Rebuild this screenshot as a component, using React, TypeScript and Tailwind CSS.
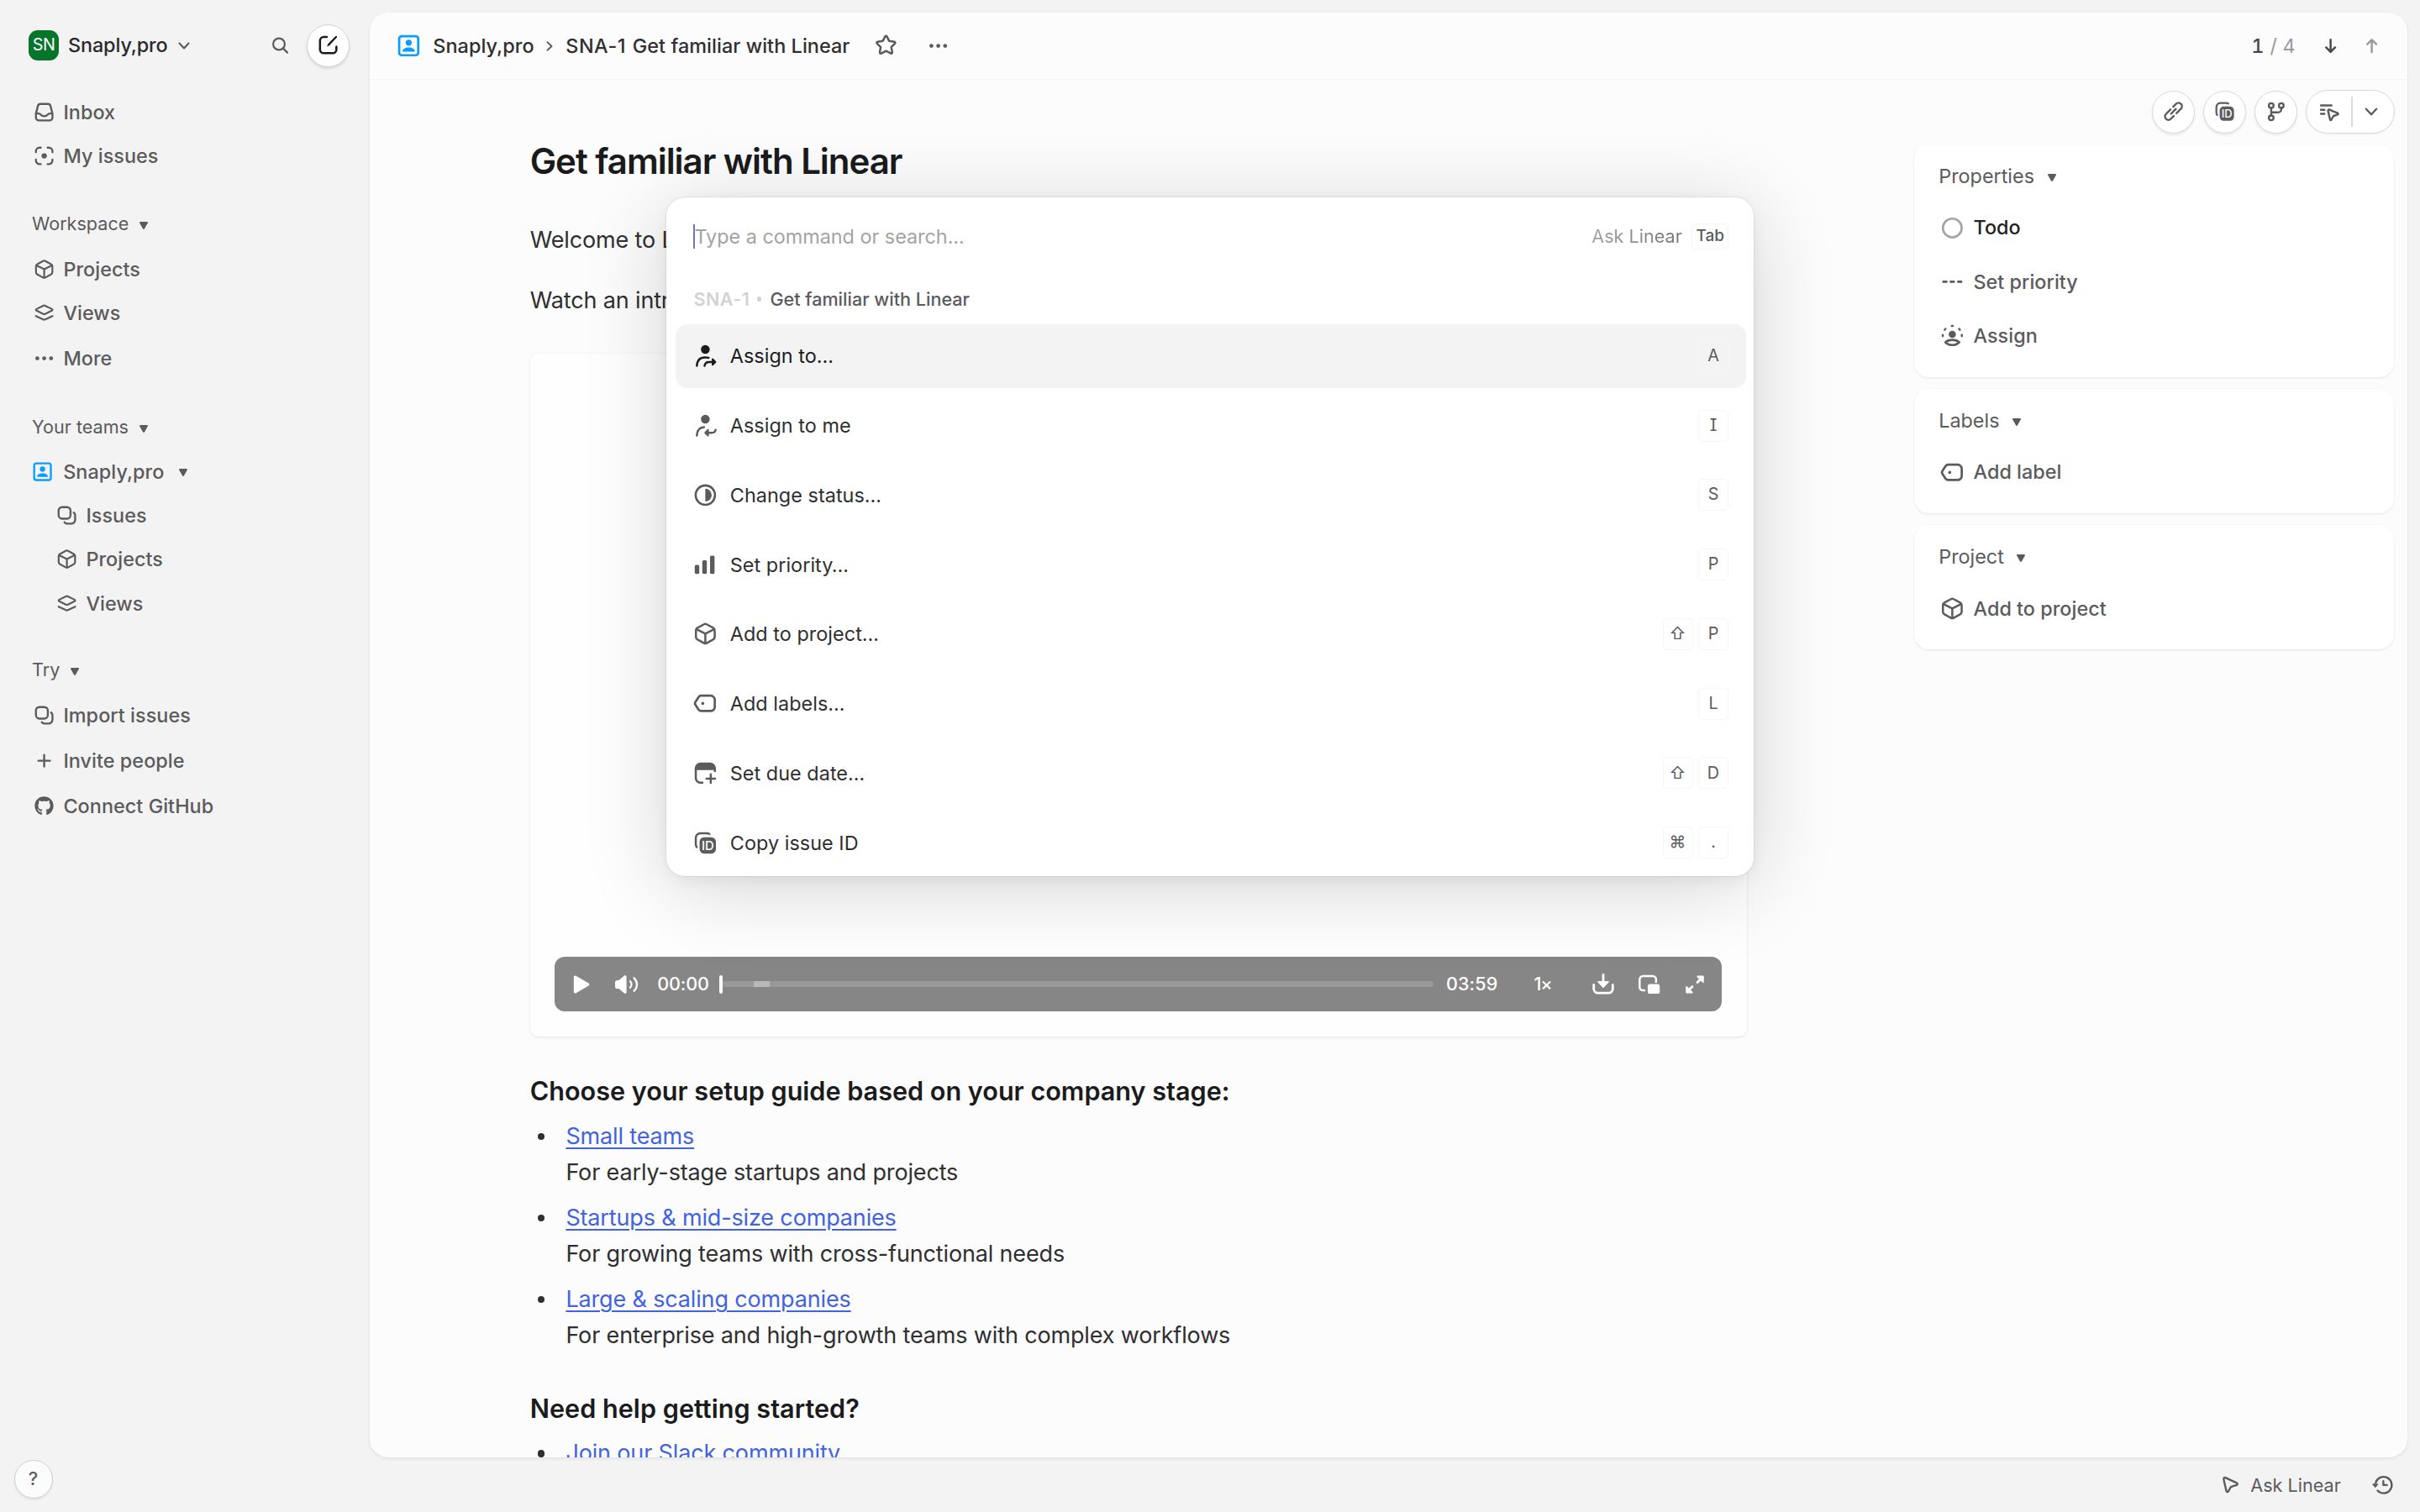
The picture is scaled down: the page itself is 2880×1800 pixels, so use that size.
import type { ReactNode } from "react";
import { FaGithub } from "react-icons/fa";

type IconProps = { className?: string };

function Icon({ className = "size-[25.2px]", children, sw = 1.5 }: { className?: string; children: ReactNode; sw?: number }) {
  return (
    <svg viewBox="0 0 16 16" fill="none" stroke="currentColor" strokeWidth={sw} strokeLinecap="round" strokeLinejoin="round" className={`shrink-0 ${className}`}>
      {children}
    </svg>
  );
}

const InboxIcon = (p: IconProps) => (
  <Icon {...p}>
    <path d="M5.2 1.75h5.6a2 2 0 0 1 1.95 1.5l1.3 5.1c.13.5.2.8.2 1.3V12A2.25 2.25 0 0 1 12 14.25H4A2.25 2.25 0 0 1 1.75 12V9.65c0-.5.07-.8.2-1.3l1.3-5.1a2 2 0 0 1 1.95-1.5Z" />
    <path d="M1.9 9h1.9c.7 0 1.2.35 1.6.85.55.65 1.35 1.15 2.6 1.15s2.05-.5 2.6-1.15c.4-.5.9-.85 1.6-.85h1.9" />
  </Icon>
);
const FocusIcon = (p: IconProps) => (
  <Icon {...p}>
    <path d="M1.75 5.2v-.7A2.75 2.75 0 0 1 4.5 1.75h.9M10.6 1.75h.9a2.75 2.75 0 0 1 2.75 2.75v.7M14.25 10.8v.7a2.75 2.75 0 0 1-2.75 2.75h-.9M5.4 14.25h-.9a2.75 2.75 0 0 1-2.75-2.75v-.7" />
    <circle cx="8" cy="8" r="2" fill="currentColor" stroke="none" />
  </Icon>
);
const CubeIcon = (p: IconProps) => (
  <Icon {...p} sw={1.4}>
    <path d="M7.1 1.8a1.9 1.9 0 0 1 1.8 0l4.25 2.3c.65.35 1.05 1 1.05 1.75v4.3c0 .75-.4 1.4-1.05 1.75L8.9 14.2a1.9 1.9 0 0 1-1.8 0l-4.25-2.3A2 2 0 0 1 1.8 10.15v-4.3c0-.75.4-1.4 1.05-1.75L7.1 1.8Z" />
    <path d="M2.2 5.1 8 8l5.8-2.9M8 8v6.2" />
  </Icon>
);
const LayersIcon = (p: IconProps) => (
  <Icon {...p} sw={1.4}>
    <path d="M7.3 2.5 2.2 5c-.55.3-.55.95 0 1.25l5.1 2.5c.45.2.95.2 1.4 0l5.1-2.5c.55-.3.55-.95 0-1.25L8.7 2.5a1.6 1.6 0 0 0-1.4 0Z" />
    <path d="m1.7 10.3 5.5 2.6c.5.25 1.1.25 1.6 0l5.5-2.6" />
  </Icon>
);
const DotsIcon = (p: IconProps) => (
  <Icon {...p}>
    <g fill="currentColor" stroke="none">
      <circle cx="2.8" cy="8" r="1.5" />
      <circle cx="8" cy="8" r="1.5" />
      <circle cx="13.2" cy="8" r="1.5" />
    </g>
  </Icon>
);
const IssuesIcon = (p: IconProps) => (
  <Icon {...p}>
    <rect x="1.75" y="1.75" width="9" height="8.7" rx="2.6" />
    <path d="M13.2 5.9c.7.5 1.05 1.2 1.05 2.1v3.3a2.95 2.95 0 0 1-2.95 2.95H8.5c-1 0-1.8-.4-2.3-1.1" />
  </Icon>
);
const PlusIcon = (p: IconProps) => (
  <Icon {...p}>
    <path d="M8 3.6v8.8M3.6 8h8.8" />
  </Icon>
);
const TeamIcon = (p: IconProps) => (
  <Icon {...p}>
    <rect x="1.7" y="1.7" width="12.6" height="12.6" rx="1.6" />
    <g fill="currentColor" stroke="none">
      <circle cx="8" cy="6" r="2" />
      <path d="M3.9 11.9c0-1.9 1.9-2.7 4.1-2.7s4.1.8 4.1 2.7Z" />
    </g>
  </Icon>
);
const ComposeIcon = (p: IconProps) => (
  <Icon {...p} sw={1.6}>
    <path d="M6.9 1.9H4.6A2.8 2.8 0 0 0 1.8 4.7v6.7a2.8 2.8 0 0 0 2.8 2.8h6.8a2.8 2.8 0 0 0 2.8-2.8V9.2" />
    <path d="M13.6 1.4c.5-.4 1.1.1.8.6L9.2 7.9c-.6.6-1.4 1-2 1.1.1-.7.5-1.5 1.1-2.1Z" fill="currentColor" stroke="none" />
    <path d="M14 1.9 8.4 7.6" strokeWidth="1.3" />
  </Icon>
);
const TagIcon = (p: IconProps) => (
  <Icon {...p}>
    <path d="M5.3 2.9h6.2a2.75 2.75 0 0 1 2.75 2.75v4.6a2.75 2.75 0 0 1-2.75 2.75H5.3c-.7 0-1.4-.35-1.8-.95L1.6 9.2a2 2 0 0 1 0-2.4l1.9-2.95c.4-.6 1.1-.95 1.8-.95Z" />
    <circle cx="6.3" cy="8" r="1" fill="currentColor" stroke="none" />
  </Icon>
);
const AssignToIcon = (p: IconProps) => (
  <Icon {...p} sw={1.35}>
    <circle cx="8" cy="3.9" r="2.9" fill="currentColor" stroke="none" />
    <path d="M2.4 14.8C2.6 11 4.8 9.2 7.8 9.2c.9 0 1.6 0 2.4.2M7.5 14.8c.2-1.8 1.3-2.6 3-2.6H14" />
    <path d="m12.8 10.3 1.9 1.9-1.9 1.9Z" fill="currentColor" strokeWidth="1.1" />
  </Icon>
);
const AssignMeIcon = (p: IconProps) => (
  <Icon {...p} sw={1.35}>
    <circle cx="8" cy="3.9" r="2.9" fill="currentColor" stroke="none" />
    <path d="M2.4 14.8C2.6 11 4.6 9.3 7.2 9.2M14.8 10.9c-.2 1.5-1.2 2-2.8 2H9" />
    <path d="m9.8 11-1.9 1.9 1.9 1.9Z" fill="currentColor" strokeWidth="1.1" />
  </Icon>
);
const StatusIcon = (p: IconProps) => (
  <Icon {...p} sw={1.4}>
    <circle cx="8" cy="8" r="6.4" />
    <path d="M8 3.8a4.2 4.2 0 0 1 0 8.4Z" fill="currentColor" stroke="none" />
  </Icon>
);
const BarsIcon = (p: IconProps) => (
  <Icon {...p}>
    <g fill="currentColor" stroke="none">
      <rect x="1" y="8" width="3" height="6" rx="0.9" />
      <rect x="6" y="5" width="3" height="9" rx="0.9" />
      <rect x="11.1" y="1.9" width="3" height="12.1" rx="0.9" />
    </g>
  </Icon>
);
const CalendarIcon = (p: IconProps) => (
  <Icon {...p} sw={1.4}>
    <path d="M1 6V4.9A3.9 3.9 0 0 1 4.9 1h6.2A3.9 3.9 0 0 1 15 4.9V6Z" fill="currentColor" stroke="none" />
    <path d="M14.3 5v1.6M1.7 5v6.3a3 3 0 0 0 3 3h1.4M11.6 8.8v5.7M8.75 11.65h5.7" />
  </Icon>
);
const CopyIdIcon = (p: IconProps) => (
  <Icon {...p} sw={1.4}>
    <path d="M10.7 2.1c-.5-.3-1-.4-1.6-.4H4.7a3 3 0 0 0-3 3v4.2c0 .8.2 1.4.6 1.9" />
    <rect x="4.2" y="4.3" width="10.8" height="10.8" rx="3" fill="currentColor" stroke="none" />
    <text x="9.65" y="12.7" textAnchor="middle" fontSize="8.2" fontWeight="500" fontFamily="Inter" fill="white" stroke="none">ID</text>
  </Icon>
);
const NoPriorityIcon = (p: IconProps) => (
  <Icon {...p}>
    <g fill="currentColor" stroke="none">
      <rect x="1.4" y="7.2" width="3.4" height="1.6" rx="0.5" />
      <rect x="6.3" y="7.2" width="3.4" height="1.6" rx="0.5" />
      <rect x="11.2" y="7.2" width="3.4" height="1.6" rx="0.5" />
    </g>
  </Icon>
);
const AssigneeIcon = (p: IconProps) => (
  <Icon {...p} sw={1.4}>
    <circle cx="8" cy="7.2" r="2.4" fill="currentColor" stroke="none" />
    <path d="M1.7 8.4v-.8M3 4.2l.5-.6M7.7 1.7h.6M12.5 3.6l.5.6M14.3 7.6v.8" />
    <path d="M3.4 12.5c1.2 1.2 2.8 1.8 4.6 1.8s3.4-.6 4.6-1.8c-1-1-2.7-1.6-4.6-1.6s-3.6.6-4.6 1.6Z" />
  </Icon>
);
const LinkIcon = (p: IconProps) => (
  <Icon {...p}>
    <g transform="rotate(-45 8 8)">
      <path d="M7.4 5.4H2.6a2.6 2.6 0 0 0 0 5.2h3.1M8.6 10.6h4.8a2.6 2.6 0 0 0 0-5.2h-3.1M5.4 8h5.2" />
    </g>
  </Icon>
);
const BranchIcon = (p: IconProps) => (
  <Icon {...p}>
    <circle cx="4.4" cy="3.6" r="1.8" />
    <circle cx="12" cy="3.6" r="1.8" />
    <circle cx="4.4" cy="12.9" r="1.8" />
    <path d="M4.4 5.4v5.7M12 5.4v.9a2.4 2.4 0 0 1-2.4 2.4H4.4" />
  </Icon>
);
const PromptIcon = (p: IconProps) => (
  <Icon {...p} sw={1.35}>
    <path d="M2.3 3.6h7M2.3 6.5h2.3M2.3 9.2h2.3" />
    <path d="m7 7.3 1.3 5.6c.1.5.7.5.9.1l1.3-2.3 2.8-1c.5-.2.5-.8 0-1L7.9 6.4c-.6-.2-1.1.3-.9.9Z" />
  </Icon>
);
const CursorIcon = (p: IconProps) => (
  <Icon {...p}>
    <path d="m2.8 3.9 2 8.8c.2.9 1.2 1 1.6.2l1.5-2.8c.2-.3.4-.5.7-.6l4-1.3c.8-.3.8-1.3 0-1.6L4.1 2.6c-.8-.3-1.5.4-1.3 1.3Z" />
  </Icon>
);
const HistoryIcon = (p: IconProps) => (
  <Icon {...p}>
    <path d="M2.7 6.4A6.2 6.2 0 1 1 4.1 12.4M8.5 5.2v3h2.7" />
    <path d="M.6 7.6h3.6L2.4 9.7Z" fill="currentColor" strokeWidth="0.8" />
  </Icon>
);
const StarIcon = (p: IconProps) => (
  <Icon {...p} sw={1.4}>
    <path d="M7.4 1.9c.25-.5.95-.5 1.2 0l1.5 3 3.4.5c.6.1.8.8.4 1.2l-2.4 2.3.6 3.4c.1.6-.5 1-1 .75L8 11.5l-3.1 1.6c-.5.25-1.1-.2-1-.75l.6-3.4L2.1 6.6c-.4-.4-.2-1.1.4-1.2l3.4-.5 1.5-3Z" />
  </Icon>
);
const ArrowDown = (p: IconProps) => (
  <Icon {...p} sw={1.6}>
    <path d="M8 3.3v9M4.6 9.2 8 12.6l3.4-3.4" />
  </Icon>
);
const ArrowUp = (p: IconProps) => (
  <Icon {...p} sw={1.6}>
    <path d="M8 12.7v-9M4.6 6.8 8 3.4l3.4 3.4" />
  </Icon>
);

const Triangle = ({ className = "" }: IconProps) => (
  <svg viewBox="0 0 10 9" className={`h-[9px] w-[10px] shrink-0 ${className}`} fill="currentColor">
    <path d="M1 0h8c.8 0 1.2.8.8 1.5L6 8.2c-.5.9-1.5.9-2 0L.2 1.5C-.2.8.2 0 1 0Z" />
  </svg>
);
const Chevron = ({ className = "" }: IconProps) => (
  <svg viewBox="0 0 14 9" className={`shrink-0 ${className}`} fill="none" stroke="currentColor" strokeWidth="2.1" strokeLinecap="round" strokeLinejoin="round">
    <path d="m1.5 1.5 5.5 6 5.5-6" />
  </svg>
);

function NavItem({ icon, label, gap, nested = false, team = false }: { icon: ReactNode; label: string; gap: string; nested?: boolean; team?: boolean }) {
  return (
    <div className={`flex h-[50px] items-center text-[23.4px] font-[470] tracking-[0.05px] ${gap} ${nested ? "pl-[67px]" : team ? "pl-[38px]" : "pl-[40px]"}`}>
      {icon}
      <span className={team ? "ml-[12px]" : "ml-[10.2px]"}>{label}</span>
      {team && <Triangle className="mt-[2px] ml-[18px]" />}
    </div>
  );
}

function NavHeading({ label, gap }: { label: string; gap: string }) {
  return (
    <div className={`flex h-[44px] items-center pl-[38px] text-[21.6px] font-[430] ${gap}`}>
      {label}
      <Triangle className="mt-[4px] ml-[13px]" />
    </div>
  );
}

function Sidebar() {
  return (
    <aside className="flex w-[439.5px] shrink-0 flex-col text-[#5b5b5d]">
      <div className="flex h-[108px] items-center pl-[34px]">
        <div className="flex size-[36px] items-center justify-center rounded-[11px] bg-[#04752b] text-[19.8px] tracking-[-0.5px] text-white">SN</div>
        <span className="ml-[11px] text-[23.4px] font-[540] tracking-[-0.12px] text-[#2a2a2c]">Snaply,pro</span>
        <Chevron className="ml-[12px] h-[9px] w-[14px]" />
        <svg viewBox="0 0 21 21" className="ml-[97.5px] size-[21px]" fill="none" stroke="currentColor" strokeWidth="2.2" strokeLinecap="round">
          <circle cx="9" cy="8.500" r="6.900" />
          <path d="m14 13.600 5 5" />
        </svg>
        <div className="ml-[21px] flex size-[51px] items-center justify-center rounded-full border-[1.5px] border-[#d2d2d2] bg-white text-[#1b1b1d] shadow-[0_2px_3px_rgba(0,0,0,0.1)]">
          <ComposeIcon />
        </div>
      </div>
      <NavItem icon={<InboxIcon />} label="Inbox" gap="mt-[1px]" />
      <NavItem icon={<FocusIcon />} label="My issues" gap="mt-[2px]" />
      <NavHeading label="Workspace" gap="mt-[33.5px]" />
      <NavItem icon={<CubeIcon />} label="Projects" gap="mt-[7.5px]" />
      <NavItem icon={<LayersIcon />} label="Views" gap="mt-[1.5px]" />
      <NavItem icon={<DotsIcon />} label="More" gap="mt-[4px]" />
      <NavHeading label="Your teams" gap="mt-[34.8px]" />
      <NavItem icon={<TeamIcon className="size-[25.2px] text-[#0a9cff]" />} label="Snaply,pro" gap="mt-[6.2px]" team />
      <NavItem icon={<IssuesIcon />} label="Issues" gap="mt-[2.2px]" nested />
      <NavItem icon={<CubeIcon />} label="Projects" gap="mt-[2px]" nested />
      <NavItem icon={<LayersIcon />} label="Views" gap="mt-[2.7px]" nested />
      <NavHeading label="Try" gap="mt-[32px]" />
      <NavItem icon={<IssuesIcon />} label="Import issues" gap="mt-[7.2px]" />
      <NavItem icon={<PlusIcon />} label="Invite people" gap="mt-[3.7px]" />
      <NavItem icon={<FaGithub className="mx-[1.1px] size-[23px] shrink-0" />} label="Connect GitHub" gap="mt-[4.2px]" />
    </aside>
  );
}

function PanelHeader() {
  return (
    <header className="flex h-[80px] shrink-0 items-center border-b border-[#f4f4f4] pl-[32px] text-[23.4px] font-[470] tracking-[0.06px] text-[#2f2f31]">
      <TeamIcon className="size-[28.8px] text-[#0a9cff]" />
      <span className="ml-[15px]">Snaply,pro</span>
      <Chevron className="ml-[12.5px] h-[8px] w-[12px] -rotate-90 text-[#5b5b5d]" />
      <span className="ml-[13.2px] tracking-[0.5px]">SNA-1</span>
      <span className="ml-[7.8px]">Get familiar with Linear</span>
      <StarIcon className="ml-[29px] size-[28.8px] text-[#5b5b5d]" />
      <DotsIcon className="ml-[34.5px] size-[25.2px] text-[#5b5b5d]" />
      <div className="ml-auto flex items-center pr-[29px] text-[#4a4a4c]">
        <span className="tabular-nums">1</span>
        <span className="ml-[7px] font-normal text-[#9a9a9b] tabular-nums">/ 4</span>
        <ArrowDown className="ml-[29.5px] size-[25.2px]" />
        <ArrowUp className="ml-[24px] size-[25.2px] text-[#9a9a9b]" />
      </div>
    </header>
  );
}

function Player() {
  return (
    <div className="flex h-[65px] items-center rounded-[12px] bg-[#868686] text-[21.6px] font-[470] text-white">
      <svg viewBox="0 0 20 22" className="ml-[22px] h-[22px] w-[20px]" fill="currentColor">
        <path d="M.8 2.2C.8.7 2.3 0 3.5.8l15 8.7c1.3.8 1.3 2.2 0 3l-15 8.7c-1.2.8-2.7.1-2.7-1.4Z" />
      </svg>
      <svg viewBox="0 0 30 24" className="ml-[29px] h-[24px] w-[30px]" fill="none" stroke="currentColor" strokeWidth="2.3" strokeLinecap="round">
        <path d="M1 9.6C1 8 2 7 3.5 7h2L11.7 1.7C12.9.7 14.6 1.3 14.6 3v18c0 1.700-1.700 2.300-2.900 1.300L5.500 17h-2C2 17 1 16 1 14.400Z" fill="currentColor" stroke="none" />
        <path d="M19 8.200c1.900 2.200 1.900 5.400 0 7.600M23.600 4.300c4.600 4.400 4.600 11 0 15.400" />
      </svg>
      <span className="ml-[21px] w-[64px]">00:00</span>
      <div className="ml-[10px] h-[22px] w-[4px] rounded-full bg-white" />
      <div className="flex h-[7px] flex-1 rounded-r-full bg-[#999999]">
        <div className="ml-[37px] w-[19px] bg-[#b8b8b8]" />
      </div>
      <span className="ml-[14.5px] w-[64.5px] tracking-[0.1px]">03:59</span>
      <span className="ml-[40px] w-[21px] tracking-[-1px]">1×</span>
      <svg viewBox="0 0 30 30" className="ml-[47px] size-[30px]" fill="none" stroke="currentColor" strokeWidth="2.8" strokeLinecap="round" strokeLinejoin="round">
        <path d="M3.700 15.500v4.600a5 5 0 0 0 5 5h12.600a5 5 0 0 0 5-5v-4.600" />
        <path d="M15 3.500v11" />
        <path d="M8.900 11.800h12.200L15 18.300Z" fill="currentColor" strokeWidth="1.5" />
      </svg>
      <svg viewBox="0 0 30 30" className="ml-[24.5px] size-[30px]" fill="none" stroke="currentColor" strokeWidth="2.5" strokeLinecap="round" strokeLinejoin="round">
        <path d="M22.800 12V9a4 4 0 0 0-4-4H7.300a4 4 0 0 0-4 4v9.500a3.500 3.500 0 0 0 3.500 3.500h2.200" />
        <rect x="12.9" y="14.5" width="14.3" height="11.5" rx="2.6" fill="currentColor" stroke="none" />
      </svg>
      <svg viewBox="0 0 30 30" className="mr-[17.4px] ml-[23.8px] size-[30px]" fill="none" stroke="currentColor" strokeWidth="2.9" strokeLinecap="round" strokeLinejoin="round">
        <path d="m18 12.500 5.500-5.500M12 17.500 6.500 23" />
        <path d="M18.300 5.500h6.600v6.600Z" fill="currentColor" strokeWidth="1.8" />
        <path d="M5.100 17.900v6.600h6.600Z" fill="currentColor" strokeWidth="1.8" />
      </svg>
    </div>
  );
}

function Bullet({ link, text }: { link: string; text?: string }) {
  return (
    <li className="flex">
      <span className="mt-[18px] ml-[9px] size-[8.5px] shrink-0 rounded-full bg-[#2f2f31]" />
      <div className="ml-[25.2px]">
        <a className="text-[#4263e0] underline decoration-[2px] underline-offset-[4px]">{link}</a>
        {text && <div>{text}</div>}
      </div>
    </li>
  );
}

function Document() {
  return (
    <main className="flex w-[1448px] shrink-0 flex-col pt-[71px] text-[27px] leading-[43.2px] tracking-[-0.15px] text-[#2f2f31]">
      <h1 className="text-[42px] leading-[52px] font-semibold tracking-[-1.03px] text-[#1b1b1d]">Get familiar with Linear</h1>
      <p className="mt-[45.6px]">Welcome to Linear!</p>
      <p className="mt-[28.8px]">Watch an intro video below.</p>
      <div className="mt-[42px] flex h-[812.9px] shrink-0 flex-col justify-end rounded-[10px] bg-[#fefefe] px-[29.6px] pb-[29.7px] shadow-[0_0_0_1.5px_rgba(0,0,0,0.018),0_2px_3px_rgba(0,0,0,0.05)]">
        <Player />
      </div>
      <h2 className="mt-[41.2px] text-[30.6px] leading-[48px] font-semibold tracking-[-0.01px] text-[#1b1b1d]">Choose your setup guide based on your company stage:</h2>
      <ul className="mt-[7.7px] flex flex-col gap-[10.8px]">
        <Bullet link="Small teams" text="For early-stage startups and projects" />
        <Bullet link="Startups & mid-size companies" text="For growing teams with cross-functional needs" />
        <Bullet link="Large & scaling companies" text="For enterprise and high-growth teams with complex workflows" />
      </ul>
      <h2 className="mt-[41.2px] text-[30.6px] leading-[48px] font-semibold tracking-[0.02px] text-[#1b1b1d]">Need help getting started?</h2>
      <ul className="mt-[7.7px]">
        <Bullet link="Join our Slack community" />
      </ul>
    </main>
  );
}

function RoundButton({ children }: { children: ReactNode }) {
  return (
    <div className="flex size-[51px] items-center justify-center rounded-full border-[1.5px] border-[#d8d8d8] bg-white shadow-[0_2px_3px_rgba(0,0,0,0.08)]">{children}</div>
  );
}

function Card({ title, children }: { title: string; children: ReactNode }) {
  return (
    <section className="rounded-[18px] bg-white pt-[17.6px] pb-[16.9px] pl-[29px] text-[23.4px] shadow-[0_0_0_1px_rgba(0,0,0,0.02),0_2px_3px_rgba(0,0,0,0.05)]">
      <div className="flex h-[40px] items-center font-[430]">
        {title}
        <Triangle className="mt-[3px] ml-[15.5px]" />
      </div>
      <div className="mt-[9px] font-[470] tracking-[0.02px]">{children}</div>
    </section>
  );
}

function Property({ icon, label, dark = false }: { icon: ReactNode; label: string; dark?: boolean }) {
  return (
    <div className={`flex h-[64.3px] items-center gap-[11px] pl-[1.5px] ${dark ? "text-[#232325]" : ""}`}>
      {icon}
      {label}
    </div>
  );
}

function Rail() {
  const big = "size-[28.8px]";
  return (
    <aside className="ml-[199.5px] flex w-[570.6px] flex-col pt-[12px] text-[#5b5b5d]">
      <div className="flex items-center justify-end gap-[9.8px]">
        <RoundButton><LinkIcon /></RoundButton>
        <RoundButton><CopyIdIcon /></RoundButton>
        <RoundButton><BranchIcon /></RoundButton>
        <div className="-mr-px flex h-[52px] w-[106px] items-center rounded-full border-[1.5px] border-[#d8d8d8] bg-white shadow-[0_1px_2px_rgba(0,0,0,0.05)]">
          <PromptIcon className="ml-[13.5px] size-[28.8px]" />
          <div className="ml-[11px] h-[36px] w-[1.5px] bg-[#dadada]" />
          <Chevron className="ml-[14.5px] h-[10px] w-[16px]" />
        </div>
      </div>
      <div className="mt-[13.3px] flex flex-col gap-[14.5px]">
        <Card title="Properties">
          <Property dark label="Todo" icon={<Icon className="size-[28.8px] text-[#a5a5a5]" sw={1.5}><circle cx="8" cy="8" r="6.2" /></Icon>} />
          <Property label="Set priority" icon={<NoPriorityIcon className={big} />} />
          <Property label="Assign" icon={<AssigneeIcon className={big} />} />
        </Card>
        <Card title="Labels">
          <Property label="Add label" icon={<TagIcon className={big} />} />
        </Card>
        <Card title="Project">
          <Property label="Add to project" icon={<CubeIcon className={big} />} />
        </Card>
      </div>
    </aside>
  );
}

const commands: { label: string; keys: string[]; Icon: (p: IconProps) => ReactNode }[] = [
  { label: "Assign to…", keys: ["A"], Icon: AssignToIcon },
  { label: "Assign to me", keys: ["I"], Icon: AssignMeIcon },
  { label: "Change status…", keys: ["S"], Icon: StatusIcon },
  { label: "Set priority…", keys: ["P"], Icon: BarsIcon },
  { label: "Add to project…", keys: ["⇧", "P"], Icon: CubeIcon },
  { label: "Add labels…", keys: ["L"], Icon: TagIcon },
  { label: "Set due date…", keys: ["⇧", "D"], Icon: CalendarIcon },
  { label: "Copy issue ID", keys: ["⌘", "."], Icon: CopyIdIcon },
];

function CommandMenu() {
  return (
    <div className="absolute top-[234.7px] left-[793px] flex h-[808.6px] w-[1294.3px] flex-col overflow-hidden rounded-[22px] bg-white shadow-[0_0_0_1px_rgba(0,0,0,0.06),0_6px_18px_rgba(0,0,0,0.05),0_14px_100px_rgba(0,0,0,0.16)]">
      <div className="flex h-[93.6px] shrink-0 items-center pr-[30.3px] pl-[32px]">
        <div className="h-[29px] w-[2px] bg-[#6b74d6]" />
        <span className="-ml-[0.5px] text-[23.4px] tracking-[-0.02px] text-[#a3a3a4]">Type a command or search...</span>
        <span className="ml-auto bg-linear-to-r from-[#a3a3a3] to-[#757575] bg-clip-text text-[21.6px] text-transparent">Ask Linear</span>
        <kbd className="ml-[11.5px] flex h-[31px] w-[43.7px] items-center justify-center rounded-[6px] border border-[#f4f4f4] font-['Inter'] text-[19px] font-[450] text-[#5b5b5d]">Tab</kbd>
      </div>
      <div className="flex h-[57.7px] shrink-0 items-center pb-[2px] pl-[32.5px] text-[21.6px]">
        <span className="font-semibold tracking-[0.46px] text-[#d3d3d4]">SNA-1</span>
        <span className="ml-[8.5px] size-[5.5px] rounded-full bg-[#d3d3d4]" />
        <span className="ml-[10px] font-[480] text-[#5b5b5d]">Get familiar with Linear</span>
      </div>
      <div className="flex flex-col gap-[7.2px] pr-[9.3px] pl-[11px]">
        {commands.map(({ label, keys, Icon: RowIcon }, i) => (
          <div key={label} className={`flex h-[75.6px] shrink-0 items-center rounded-[14px] pr-[21px] pl-[21px] ${i === 0 ? "bg-[#f3f3f3] text-[#1b1b1d]" : "text-[#5b5b5d]"}`}>
            <RowIcon className="size-[28.8px]" />
            <span className={`ml-[15px] text-[23.4px] tracking-[0.04px] ${i === 0 ? "text-[#1b1b1d]" : "text-[#2f2f31]"}`}>{label}</span>
            <div className="ml-auto flex gap-[6.5px] text-[#5b5b5d]">
              {keys.map((k) => (
                <kbd key={k} className="flex h-[38px] w-[36px] items-center justify-center rounded-[5px] border border-[#f5f5f5] font-['Inter'] text-[19.8px] font-[440] [font-feature-settings:'cv08']">{k}</kbd>
              ))}
            </div>
          </div>
        ))}
      </div>
    </div>
  );
}

export default function App() {
  return (
    <div className="relative flex h-[1800px] w-[2880px] flex-col overflow-hidden bg-[#f3f3f3] font-['Inter',sans-serif]">
      <div className="flex h-[1735px] shrink-0">
        <Sidebar />
        <div className="mt-[15px] flex h-[1720px] w-[2425px] flex-col overflow-hidden rounded-[22px] bg-[#fcfcfc] shadow-[0_0_0_1px_rgba(0,0,0,0.015),0_2px_4px_rgba(0,0,0,0.06)]">
          <PanelHeader />
          <div className="flex min-h-0 flex-1 overflow-hidden pl-[191.2px]">
            <Document />
            <Rail />
          </div>
        </div>
      </div>
      <footer className="flex h-[65px] items-center text-[#5b5b5d]">
        <div className="mb-[14px] ml-[16.5px] flex size-[46px] items-center justify-center rounded-full border-[1.5px] border-[#cfcfcf] bg-[#fcfcfc] text-[21.6px] font-[550] shadow-[0_2px_3px_rgba(0,0,0,0.06)]">?</div>
        <CursorIcon className="ml-auto size-[25.2px]" />
        <span className="mt-px ml-[11px] text-[21.6px] font-[430]">Ask Linear</span>
        <HistoryIcon className="mr-[31.5px] ml-[37.5px] size-[25.2px]" />
      </footer>
      <CommandMenu />
    </div>
  );
}
